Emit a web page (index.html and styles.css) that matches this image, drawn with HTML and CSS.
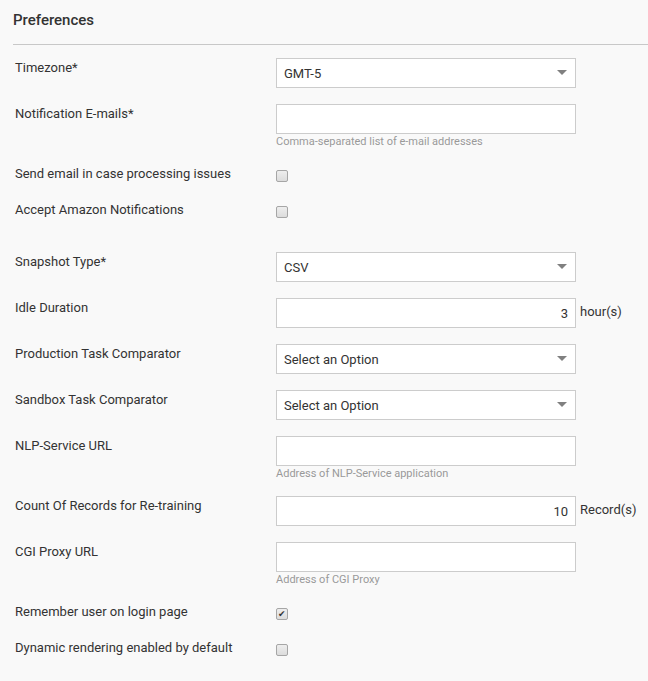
FILE: index.html
```html
<!DOCTYPE html>
<html lang="en">
<head>
    <meta charset="UTF-8">
    <meta name="viewport" content="width=device-width, initial-scale=1.0">
    <title>Preferences</title>
    <link rel="stylesheet" href="styles.css">
</head>
<body>
    <div class="panel">
        <div class="panel-header">
            <h2>Preferences</h2>
        </div>

        <form class="prefs-form">
            <div class="row">
                <label class="row-label" for="timezone">Timezone*</label>
                <div class="row-field">
                    <div class="select-wrap">
                        <select id="timezone" class="control">
                            <option>GMT-5</option>
                        </select>
                    </div>
                </div>
            </div>

            <div class="row">
                <label class="row-label" for="emails">Notification E-mails*</label>
                <div class="row-field">
                    <input type="text" id="emails" class="control">
                    <div class="help">Comma-separated list of e-mail addresses</div>
                </div>
            </div>

            <div class="row check-row">
                <label class="row-label" for="processingIssues">Send email in case processing issues</label>
                <input type="checkbox" id="processingIssues" class="checkbox">
            </div>

            <div class="row check-row section-end">
                <label class="row-label" for="amazonNotifications">Accept Amazon Notifications</label>
                <input type="checkbox" id="amazonNotifications" class="checkbox">
            </div>

            <div class="row">
                <label class="row-label" for="snapshotType">Snapshot Type*</label>
                <div class="row-field">
                    <div class="select-wrap">
                        <select id="snapshotType" class="control">
                            <option>CSV</option>
                        </select>
                    </div>
                </div>
            </div>

            <div class="row">
                <label class="row-label" for="idleDuration">Idle Duration</label>
                <div class="row-field inline">
                    <input type="text" id="idleDuration" class="control number" value="3">
                    <span class="unit">hour(s)</span>
                </div>
            </div>

            <div class="row">
                <label class="row-label" for="prodComparator">Production Task Comparator</label>
                <div class="row-field">
                    <div class="select-wrap">
                        <select id="prodComparator" class="control">
                            <option>Select an Option</option>
                        </select>
                    </div>
                </div>
            </div>

            <div class="row">
                <label class="row-label" for="sandboxComparator">Sandbox Task Comparator</label>
                <div class="row-field">
                    <div class="select-wrap">
                        <select id="sandboxComparator" class="control">
                            <option>Select an Option</option>
                        </select>
                    </div>
                </div>
            </div>

            <div class="row">
                <label class="row-label" for="nlpUrl">NLP-Service URL</label>
                <div class="row-field">
                    <input type="text" id="nlpUrl" class="control">
                    <div class="help">Address of NLP-Service application</div>
                </div>
            </div>

            <div class="row">
                <label class="row-label" for="retrainCount">Count Of Records for Re-training</label>
                <div class="row-field inline">
                    <input type="text" id="retrainCount" class="control number" value="10">
                    <span class="unit">Record(s)</span>
                </div>
            </div>

            <div class="row">
                <label class="row-label" for="cgiProxy">CGI Proxy URL</label>
                <div class="row-field">
                    <input type="text" id="cgiProxy" class="control">
                    <div class="help">Address of CGI Proxy</div>
                </div>
            </div>

            <div class="row check-row">
                <label class="row-label" for="rememberUser">Remember user on login page</label>
                <input type="checkbox" id="rememberUser" class="checkbox" checked>
            </div>

            <div class="row check-row">
                <label class="row-label" for="dynamicRendering">Dynamic rendering enabled by default</label>
                <input type="checkbox" id="dynamicRendering" class="checkbox">
            </div>
        </form>
    </div>
</body>
</html>
```

FILE: styles.css
```css
body {
    margin: 0;
    background-color: #f9f9f9;
    font-family: Roboto, Arial, sans-serif;
    font-size: 13px;
    color: #333;
}
.panel {
    padding-left: 13px;
}
.panel-header {
    height: 45px;
    border-bottom: 1px solid #c8c8c8;
    box-sizing: border-box;
}
.panel-header h2 {
    margin: 0;
    padding-top: 11px;
    font-size: 15px;
    font-weight: 500;
    line-height: 18px;
    color: #333;
}
.prefs-form {
    padding: 13px 0 0 2px;
}
.row {
    display: flex;
    align-items: flex-start;
    margin-bottom: 16px;
}
.row.section-end {
    margin-bottom: 32px;
}
.row-label {
    width: 261px;
    flex-shrink: 0;
    padding-top: 1px;
    line-height: 18px;
}
.check-row .row-label {
    padding-top: 0;
    line-height: 20px;
}
.row-field {
    display: flex;
    flex-direction: column;
}
.row-field.inline {
    flex-direction: row;
    align-items: flex-start;
}
.control {
    width: 300px;
    height: 30px;
    box-sizing: border-box;
    margin: 0;
    padding: 0 7px;
    border: 1px solid #ccc;
    border-radius: 0;
    background-color: #fff;
    font-family: inherit;
    font-size: 13px;
    color: #333;
    outline: none;
}
.control.number {
    text-align: right;
}
select.control {
    appearance: none;
    -webkit-appearance: none;
}
.select-wrap {
    position: relative;
}
.select-wrap::after {
    content: "";
    position: absolute;
    top: 12px;
    right: 9px;
    border-left: 5px solid transparent;
    border-right: 5px solid transparent;
    border-top: 5px solid #808080;
    pointer-events: none;
}
.help {
    padding-top: 1px;
    font-size: 11px;
    line-height: 13px;
    color: #999;
}
.unit {
    margin-left: 4px;
    line-height: 28px;
}
.checkbox {
    appearance: none;
    -webkit-appearance: none;
    position: relative;
    width: 12px;
    height: 12px;
    margin: 6px 0 0 0;
    border: 1px solid #a6a6a6;
    border-radius: 2px;
    background: linear-gradient(#eee, #dcdcdc);
    box-sizing: border-box;
}
.checkbox:checked::after {
    content: "\2714";
    position: absolute;
    top: -1px;
    left: 1px;
    font-family: "DejaVu Sans", sans-serif;
    font-size: 9px;
    font-weight: bold;
    line-height: 12px;
    color: #333;
}
```
